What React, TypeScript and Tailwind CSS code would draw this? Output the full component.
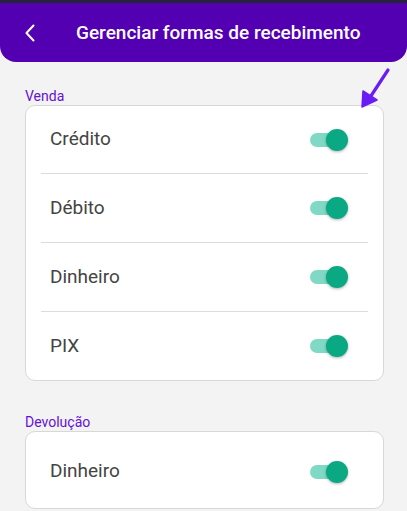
import React from "react";

function Toggle() {
  return (
    <div className="relative w-[38px] h-[22px] shrink-0">
      <div className="absolute left-0 top-[4px] w-[34px] h-[14px] rounded-full bg-[#80d9c4]" />
      <div className="absolute right-0 top-0 w-[22px] h-[22px] rounded-full bg-[#0aa984] shadow-[0_1px_3px_rgba(0,0,0,0.3)]" />
    </div>
  );
}

function Row({ label, last, h }: { label: string; last?: boolean; h: string }) {
  return (
    <div className={`flex items-center justify-between pl-[9px] pr-[20px] ${h} ${last ? "" : "border-b border-[#dcdcdc]"}`}>
      <span className="text-[19px] text-[#444444]">{label}</span>
      <Toggle />
    </div>
  );
}

export default function App() {
  return (
    <div className="relative w-[407px] h-[511px] overflow-hidden bg-[#f3f3f3]" style={{ fontFamily: "Roboto, 'Noto Sans', sans-serif" }}>
      <div className="h-[3px] bg-[#25243c]" />
      <div className="h-[59px] bg-[#5300b3] rounded-b-[16px] flex items-center pt-[1px]">
        <svg className="ml-[24px]" width="12" height="18" viewBox="0 0 12 18" fill="none">
          <path d="M9.5 1.5 L2.5 9 L9.5 16.5" stroke="white" strokeWidth="2" strokeLinecap="round" strokeLinejoin="round" />
        </svg>
        <span className="ml-[40px] text-[19px] font-medium text-white">Gerenciar formas de recebimento</span>
      </div>

      <div className="ml-[25px] mr-[23px]">
        <div className="mt-[26px] text-[14px] leading-[16px] text-[#6312d6]">Venda</div>
        <div className="mt-[1px] bg-white border border-[#d8d8d8] rounded-[10px]">
          <div className="mx-[15px]">
            <Row label="Crédito" h="h-[68px]" />
            <Row label="Débito" h="h-[69px]" />
            <Row label="Dinheiro" h="h-[69px]" />
            <Row label="PIX" last h="h-[68px]" />
          </div>
        </div>

        <div className="mt-[33px] text-[14px] leading-[16px] text-[#6312d6]">Devolução</div>
        <div className="mt-[1px] bg-white border border-[#d8d8d8] rounded-[10px]">
          <div className="mx-[15px] pt-[3px]">
            <Row label="Dinheiro" last h="h-[73px]" />
          </div>
        </div>
      </div>

      <svg className="absolute left-[355px] top-[64px]" width="40" height="50" viewBox="0 0 40 50" fill="none">
        <path d="M33 6 L12 38" stroke="#6b1cf6" strokeWidth="3.2" strokeLinecap="round" />
        <path d="M7 43 L8 27 L22 36 Z" fill="#6b1cf6" stroke="#6b1cf6" strokeWidth="1.5" strokeLinejoin="round" />
      </svg>
    </div>
  );
}
